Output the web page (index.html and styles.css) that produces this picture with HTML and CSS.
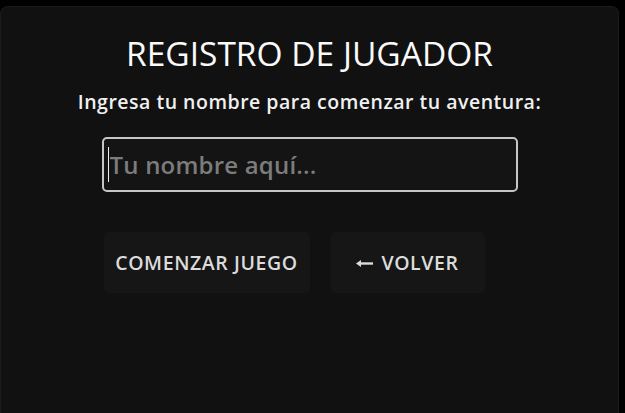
FILE: index.html
```html
<!DOCTYPE html>
<html lang="es">
<head>
<meta charset="utf-8">
<title>Registro de jugador</title>
<link rel="stylesheet" href="styles.css">
</head>
<body>
<main class="card">
  <h1 class="title">REGISTRO DE JUGADOR</h1>
  <p class="subtitle">Ingresa tu nombre para comenzar tu aventura:</p>
  <div class="form">
    <div class="input-wrap">
      <input class="name-input" type="text" placeholder="Tu nombre aquí...">
      <span class="caret"></span>
    </div>
    <div class="actions">
      <button class="btn btn-start" type="button">COMENZAR JUEGO</button>
      <button class="btn btn-back" type="button"><svg class="arrow" width="17" height="9" viewBox="0 0 17 9" aria-hidden="true"><path d="M4 4.5H17" stroke="currentColor" stroke-width="2.4"/><path d="M0 4.5L5 1V8Z" fill="currentColor"/></svg>VOLVER</button>
    </div>
  </div>
</main>
</body>
</html>
```
FILE: styles.css
```css
html, body {
  margin: 0;
  padding: 0;
  background: #000;
  height: 100%;
  overflow: hidden;
}
body {
  font-family: "Open Sans", "Noto Sans", sans-serif;
  padding-top: 6px;
}
.card {
  box-sizing: border-box;
  width: 619px;
  height: 407px;
  background: #111111;
  border: 1px solid #1c1c1c;
  border-bottom: none;
  border-radius: 8px 8px 0 0;
  display: flex;
  flex-direction: column;
  align-items: center;
  padding-top: 26px;
}
.title {
  margin: 0;
  font-size: 33.5px;
  font-weight: 500;
  line-height: 40px;
  color: #fafafa;
}
.subtitle {
  margin: 16px 0 0;
  font-size: 19.5px;
  font-weight: 600;
  line-height: 26px;
  letter-spacing: 0.5px;
  color: #f0f0f0;
}
.form {
  width: 416px;
  margin-top: 22px;
  display: flex;
  flex-direction: column;
}
.input-wrap {
  position: relative;
}
.name-input {
  box-sizing: border-box;
  display: block;
  width: 416px;
  height: 55px;
  margin: 0;
  padding: 0 6px;
  background: #141414;
  border: 2px solid #c6c6c6;
  border-radius: 5px;
  font-family: "Open Sans", "Noto Sans", sans-serif;
  font-size: 24px;
  font-weight: 600;
  letter-spacing: 0.2px;
  color: #eee;
  outline: none;
}
.name-input::placeholder {
  color: #7c7c7c;
  opacity: 1;
}
.caret {
  position: absolute;
  left: 6px;
  top: 10px;
  width: 1px;
  height: 35px;
  background: #f0f0f0;
}
.actions {
  display: flex;
  gap: 21px;
  margin-top: 40px;
  padding-left: 2px;
}
.btn {
  display: flex;
  align-items: center;
  justify-content: center;
  height: 61px;
  margin: 0;
  padding: 0;
  border: none;
  border-radius: 5px;
  background: #161616;
  color: #dcdcdc;
  font-family: "Open Sans", "Noto Sans", sans-serif;
  font-size: 19.5px;
  font-weight: 600;
  letter-spacing: 0.6px;
  cursor: pointer;
}
.btn-start {
  width: 206px;
}
.btn-back {
  width: 154px;
  gap: 8px;
}
.arrow {
  display: block;
  margin-top: 1px;
}
```
